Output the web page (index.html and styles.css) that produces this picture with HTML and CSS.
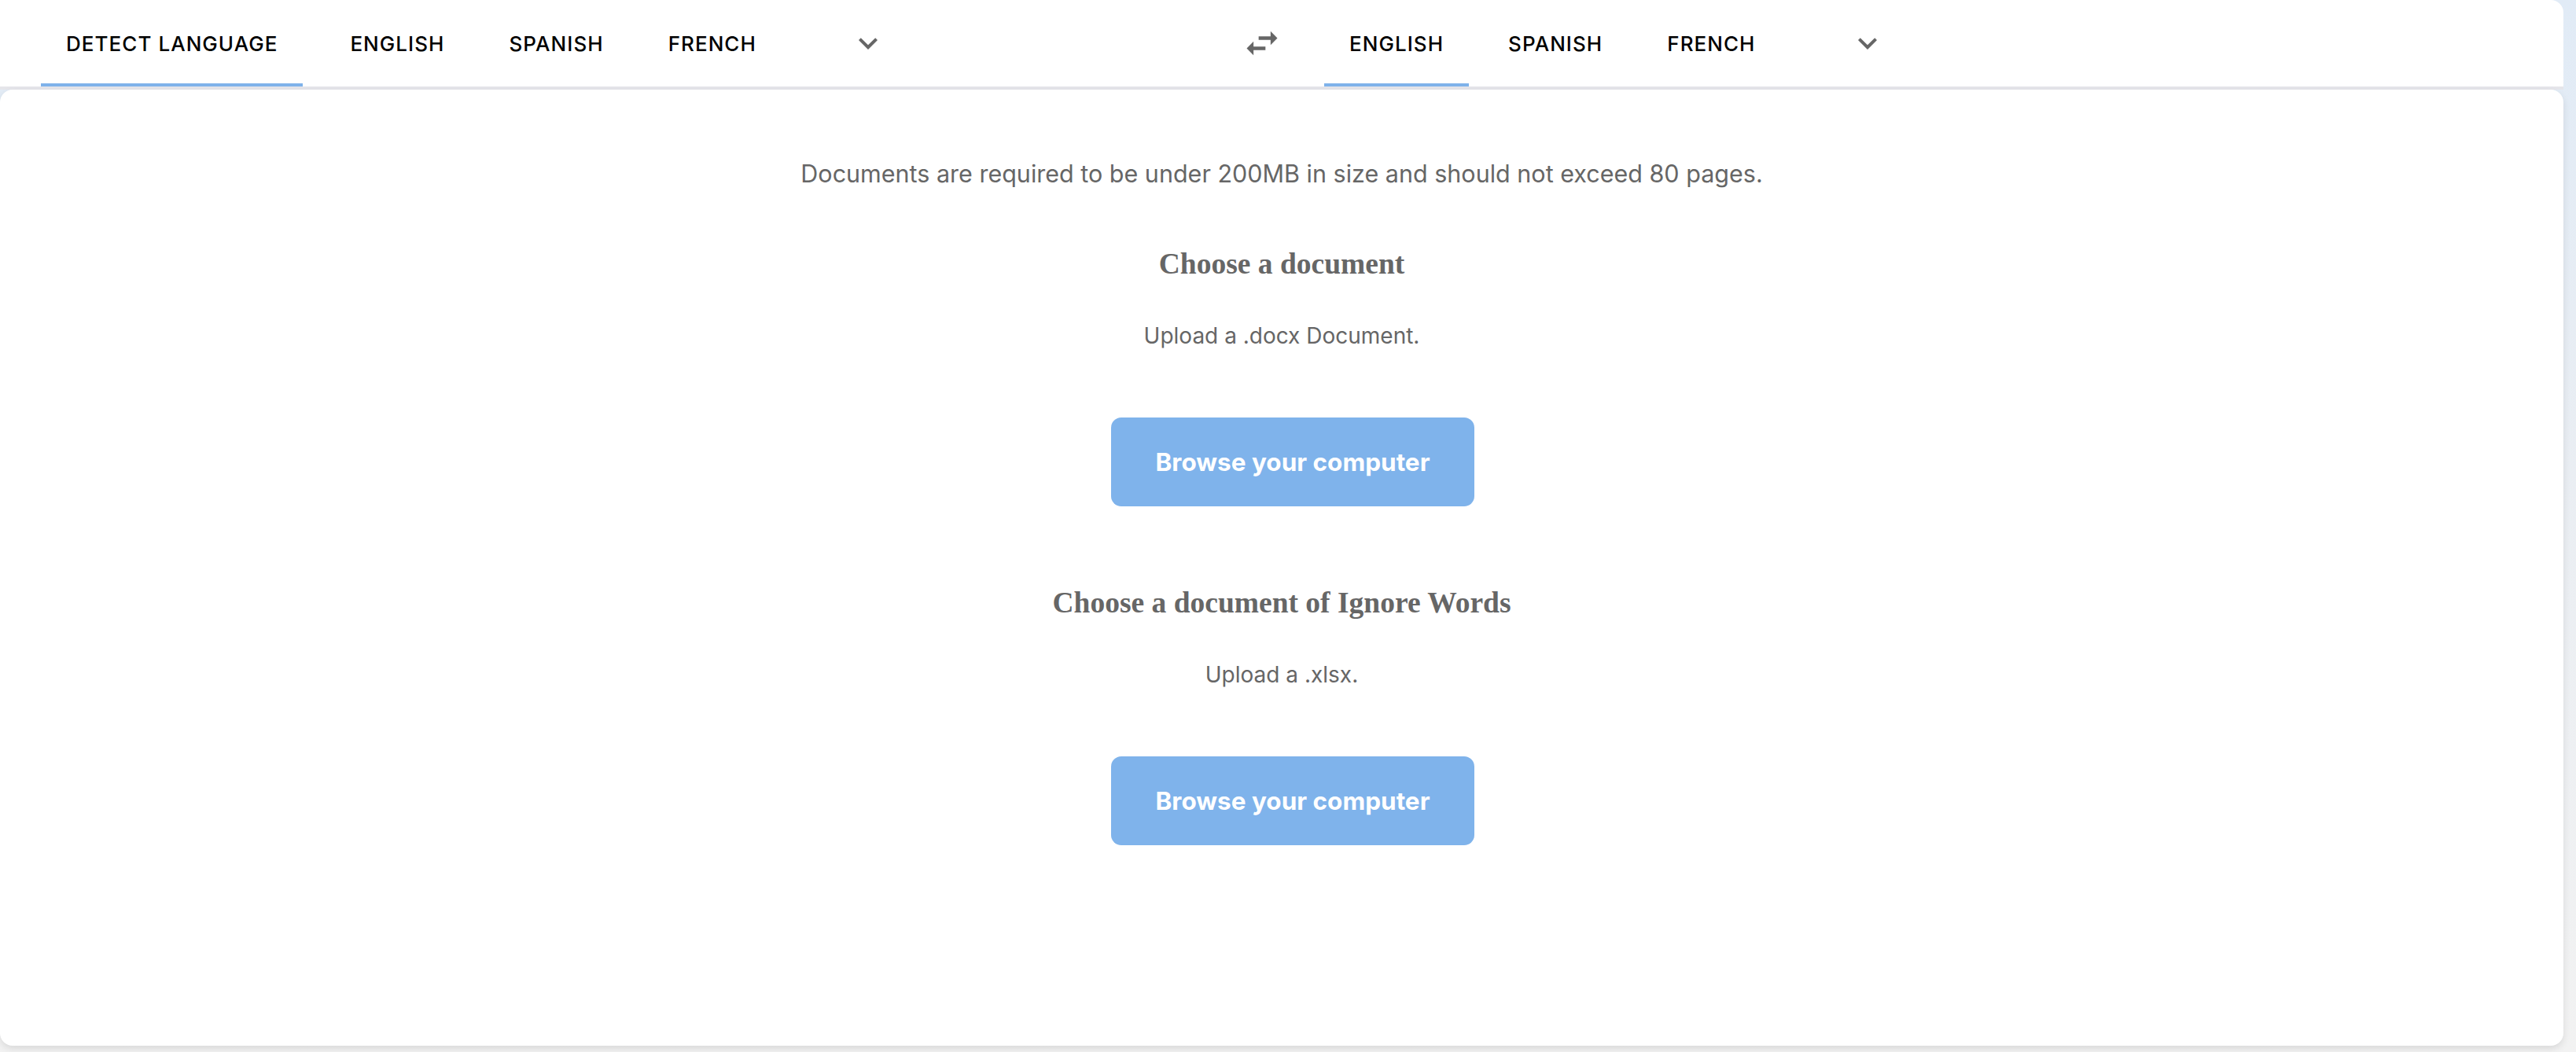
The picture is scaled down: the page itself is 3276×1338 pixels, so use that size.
FILE: index.html
```html
<!DOCTYPE html>
<html lang="en">
<head>
<meta charset="utf-8">
<title>Document translation</title>
<link rel="stylesheet" href="styles.css">
</head>
<body>
<div class="app">
  <header class="lang-bar">
    <div class="lang-side lang-source">
      <button class="tab tab-detect active">DETECT LANGUAGE</button>
      <button class="tab">ENGLISH</button>
      <button class="tab">SPANISH</button>
      <button class="tab">FRENCH</button>
      <button class="more" aria-label="More languages">
        <svg viewBox="0 0 24 24" width="48" height="48"><path d="M16.59 8.59L12 13.17 7.41 8.59 6 10l6 6 6-6z"/></svg>
      </button>
    </div>
    <button class="swap" aria-label="Swap languages">
      <svg viewBox="0 0 24 24" width="52" height="52"><path d="M6.99 11L3 15l3.99 4v-3H14v-2H6.99v-3zM21 9l-3.99-4v3H10v2h7.01v3L21 9z"/></svg>
    </button>
    <div class="lang-side lang-target">
      <button class="tab active">ENGLISH</button>
      <button class="tab">SPANISH</button>
      <button class="tab">FRENCH</button>
      <button class="more" aria-label="More languages">
        <svg viewBox="0 0 24 24" width="48" height="48"><path d="M16.59 8.59L12 13.17 7.41 8.59 6 10l6 6 6-6z"/></svg>
      </button>
    </div>
  </header>
  <main class="panel">
    <p class="notice">Documents are required to be under 200MB in size and should not exceed 80 pages.</p>
    <section class="upload upload-first">
      <h3 class="upload-title">Choose a document</h3>
      <p class="upload-hint">Upload a .docx Document.</p>
      <button class="browse">Browse your computer</button>
    </section>
    <section class="upload upload-second">
      <h3 class="upload-title">Choose a document of Ignore Words</h3>
      <p class="upload-hint">Upload a .xlsx.</p>
      <button class="browse">Browse your computer</button>
    </section>
  </main>
</div>
</body>
</html>
```
FILE: styles.css
```css
html, body {
  margin: 0;
  padding: 0;
}
body {
  height: 1338px;
  overflow: hidden;
  background: linear-gradient(180deg, #e1ebf6 0%, #eaeef3 45%, #f2f2f2 100%);
  font-family: Inter, "Liberation Sans", sans-serif;
}
.app {
  width: calc(100% - 16px);
}
.lang-bar {
  display: flex;
  height: 110px;
  background: #fff;
  border-top-right-radius: 16px;
  border-bottom: 4px solid #e5e5ea;
}
.lang-side {
  display: flex;
  align-items: stretch;
  box-sizing: border-box;
}
.lang-source {
  width: 1579px;
  padding-left: 52px;
}
.lang-target {
  padding-left: 53px;
}
.tab {
  height: 110px;
  box-sizing: border-box;
  padding: 4px 32px 0;
  margin-right: 18px;
  border: none;
  border-bottom: 4px solid transparent;
  background: none;
  font-family: Inter, "Liberation Sans", sans-serif;
  font-weight: 500;
  font-size: 26px;
  letter-spacing: 1.05px;
  color: #000;
  cursor: pointer;
}
.tab-detect {
  margin-right: 28px;
}
.tab.active {
  border-bottom-color: #7fb2ea;
}
.more, .swap {
  display: flex;
  align-items: center;
  justify-content: center;
  align-self: center;
  padding: 0;
  border: none;
  background: none;
  fill: #666;
  cursor: pointer;
}
.more {
  margin-left: 68px;
}
.panel {
  height: 1216px;
  box-sizing: border-box;
  background: #fff;
  border-radius: 16px;
  box-shadow: 0 4px 10px rgba(0, 0, 0, 0.1);
  display: flex;
  flex-direction: column;
  align-items: center;
  padding-top: 89px;
  color: #666;
}
.notice {
  margin: 0;
  font-size: 30.5px;
  line-height: 36px;
  color: #666;
}
.upload {
  display: flex;
  flex-direction: column;
  align-items: center;
}
.upload-first {
  margin-top: 74px;
}
.upload-second {
  margin-top: 100px;
}
.upload-title {
  margin: 0 0 52px;
  font-family: "Liberation Serif", "Times New Roman", serif;
  font-weight: 700;
  font-size: 37.5px;
  line-height: 45px;
  color: #666;
}
.upload-hint {
  margin: 0 0 87px;
  font-size: 28px;
  line-height: 34px;
  color: #666;
}
.browse {
  width: 462px;
  height: 113px;
  margin-left: 28px;
  border: none;
  border-radius: 13px;
  background: #7fb3eb;
  color: #fff;
  font-family: Inter, "Liberation Sans", sans-serif;
  font-weight: 700;
  font-size: 31.5px;
  cursor: pointer;
}
```
